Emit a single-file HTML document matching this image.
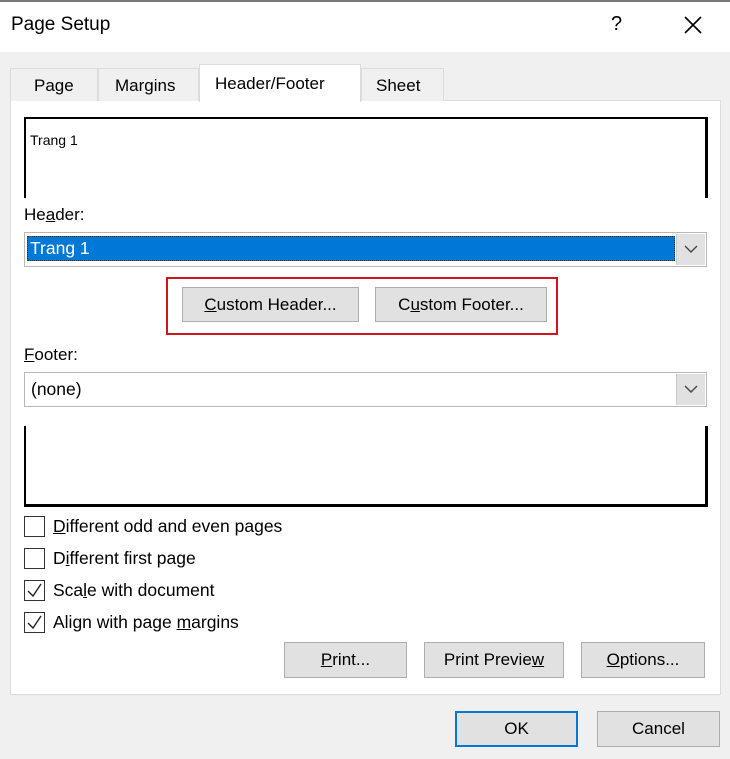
<!DOCTYPE html>
<html><head><style>
*{box-sizing:border-box;margin:0;padding:0}
body{width:730px;height:759px;background:#f0f0f0;font-family:"Liberation Sans",sans-serif;font-size:17px;color:#000;position:relative;overflow:hidden}
.a{position:absolute}
.btn{position:absolute;background:#e1e1e1;border:1px solid #adadad;display:flex;align-items:center;justify-content:center;font-size:17px}
.cb{position:absolute;left:24px;width:21px;height:21px;border:1px solid #333;background:#fff}
.lbl{position:absolute;left:53px;font-size:17.5px}
u{text-decoration:underline}
.dd{position:absolute;right:1px;top:1px;bottom:1px;width:29px;background:#e1e1e1;border-left:1px solid #ccc}
</style></head><body>
<div class="a" style="left:0;top:0;width:730px;height:2px;background:#777"></div>
<div class="a" style="left:0;top:2px;width:730px;height:50px;background:#fff"></div>
<div class="a" style="left:11px;top:14px;font-size:19px">Page Setup</div>
<div class="a" style="left:611px;top:13px;font-size:20px">?</div>
<svg class="a" style="left:683px;top:15px" width="20" height="20"><path d="M2 2L18 18M18 2L2 18" stroke="#000" stroke-width="1.6"/></svg>

<div class="a" style="left:10px;top:100px;width:711px;height:595px;background:#fff;border:1px solid #dcdcdc"></div>
<div class="a" style="left:10px;top:68px;width:88px;height:33px;background:#f0f0f0;border:1px solid #dcdcdc;border-bottom:none"></div>
<div class="a" style="left:34px;top:76px">Page</div>
<div class="a" style="left:98px;top:68px;width:101px;height:33px;background:#f0f0f0;border:1px solid #dcdcdc;border-bottom:none"></div>
<div class="a" style="left:115px;top:76px">Margins</div>
<div class="a" style="left:199px;top:64px;width:162px;height:38px;background:#fff;border:1px solid #dcdcdc;border-bottom:none"></div>
<div class="a" style="left:215px;top:74px">Header/Footer</div>
<div class="a" style="left:361px;top:68px;width:83px;height:33px;background:#f0f0f0;border:1px solid #dcdcdc;border-bottom:none"></div>
<div class="a" style="left:376px;top:76px">Sheet</div>

<div class="a" style="left:24px;top:117px;width:684px;height:81px;border:2px solid #000;border-bottom:none;border-right-width:3px"></div>
<div class="a" style="left:30px;top:132px;font-size:14px">Trang 1</div>

<div class="a" style="left:24px;top:205px">He<u>a</u>der:</div>
<div class="a" style="left:24px;top:232px;width:683px;height:35px;border:1px solid #b8b8b8;background:#fff">
<div class="a" style="left:2px;top:3px;width:648px;height:25px;background:#0078d7;border:1px dotted #333;color:#fff;padding-left:2px;font-size:17.5px;line-height:23px">Trang 1</div>
<div class="dd"></div>
<svg class="a" style="right:8px;top:12px" width="14" height="9"><path d="M1 1L7 7L13 1" stroke="#444" fill="none" stroke-width="1.4"/></svg>
</div>

<div class="a" style="left:166px;top:277px;width:392px;height:58px;border:2px solid #d0141d"></div>
<div class="btn" style="left:182px;top:287px;width:177px;height:35px"><span><u>C</u>ustom Header...</span></div>
<div class="btn" style="left:375px;top:287px;width:172px;height:35px"><span>C<u>u</u>stom Footer...</span></div>

<div class="a" style="left:24px;top:345px"><u>F</u>ooter:</div>
<div class="a" style="left:24px;top:372px;width:683px;height:35px;border:1px solid #b8b8b8;background:#fff">
<div class="a" style="left:6px;top:6px;font-size:17.5px">(none)</div>
<div class="dd"></div>
<svg class="a" style="right:8px;top:12px" width="14" height="9"><path d="M1 1L7 7L13 1" stroke="#444" fill="none" stroke-width="1.4"/></svg>
</div>
<div class="a" style="left:24px;top:426px;width:684px;height:81px;border:2px solid #000;border-top:none;border-right-width:3px;border-bottom-width:3px"></div>

<div class="cb" style="top:516px"></div><div class="lbl" style="top:516px"><u>D</u>ifferent odd and even pages</div>
<div class="cb" style="top:548px"></div><div class="lbl" style="top:548px">D<u>i</u>fferent first page</div>
<div class="cb" style="top:580px"><svg width="19" height="19"><path d="M3 10L8 15L16 3" stroke="#222" fill="none" stroke-width="1.4"/></svg></div><div class="lbl" style="top:580px">Sca<u>l</u>e with document</div>
<div class="cb" style="top:612px"><svg width="19" height="19"><path d="M3 10L8 15L16 3" stroke="#222" fill="none" stroke-width="1.4"/></svg></div><div class="lbl" style="top:612px">Align with page <u>m</u>argins</div>

<div class="btn" style="left:284px;top:642px;width:123px;height:36px"><span><u>P</u>rint...</span></div>
<div class="btn" style="left:424px;top:642px;width:140px;height:36px"><span>Print Previe<u>w</u></span></div>
<div class="btn" style="left:581px;top:642px;width:124px;height:36px"><span><u>O</u>ptions...</span></div>

<div class="btn" style="left:455px;top:711px;width:123px;height:36px;border:2px solid #0078d7">OK</div>
<div class="btn" style="left:597px;top:711px;width:123px;height:36px">Cancel</div>
</body></html>
